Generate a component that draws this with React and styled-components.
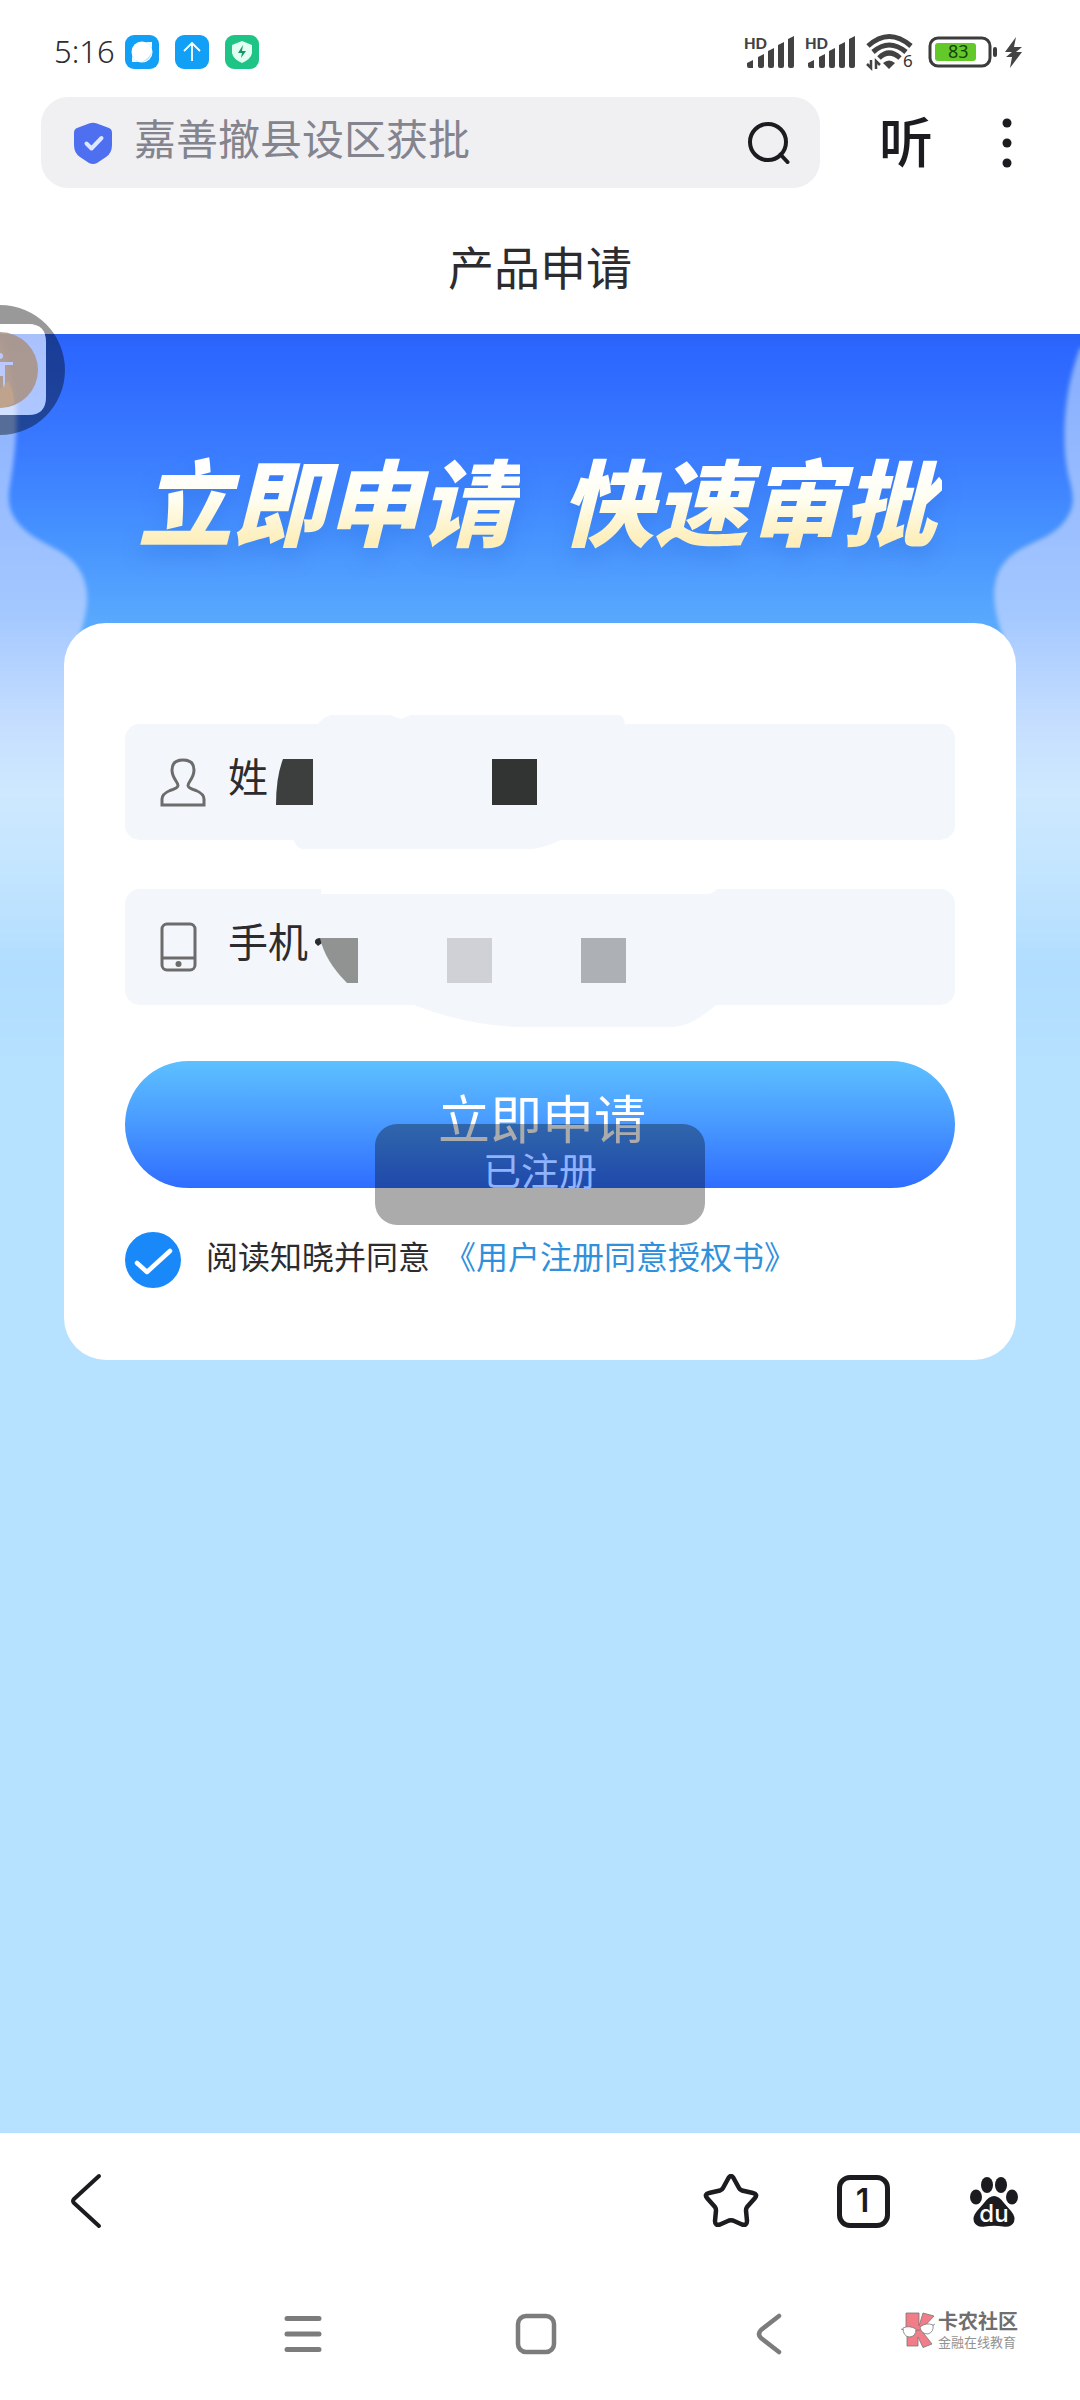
import React, { useState } from "react";
import styled, { createGlobalStyle } from "styled-components";

const GlobalStyle = createGlobalStyle`
  *, *::before, *::after { box-sizing: border-box; }
  body {
    margin: 0;
    background: #fff;
    font-family: "Noto Sans CJK SC", sans-serif;
    color: #2c2c2e;
  }
  button, input { font: inherit; color: inherit; }
`;

const Page = styled.div`
  min-height: 100vh;
  display: flex;
  flex-direction: column;
  background: #fff;
`;

const StatusBar = styled.header`
  height: 97px;
  padding: 7px 56px 0 54px;
  display: flex;
  align-items: center;
  justify-content: space-between;
`;

const StatusGroup = styled.div`
  display: flex;
  align-items: center;
  gap: ${(p) => p.$gap}px;
`;

const Clock = styled.time`
  width: 71px;
  font-family: "Noto Sans", sans-serif;
  font-weight: 300;
  font-size: 31px;
  line-height: 36px;
  padding-bottom: 2px;
`;

const AddressRow = styled.div`
  display: flex;
  align-items: center;
  padding: 0 60px 0 41px;
`;

const SearchBox = styled.form`
  flex: 1;
  height: 91px;
  display: flex;
  align-items: center;
  gap: 22px;
  padding: 0 30px 0 33px;
  border-radius: 27px;
  background: #f0f0f3;
`;

const SearchInput = styled.input`
  flex: 1;
  min-width: 0;
  height: 60px;
  padding: 0 0 12px;
  border: 0;
  outline: 0;
  background: transparent;
  font-size: 42px;
  line-height: 48px;
  color: #84848e;
  &::placeholder { color: #84848e; opacity: 1; }
`;

const IconButton = styled.button`
  display: flex;
  align-items: center;
  justify-content: center;
  flex: none;
  padding: 0;
  border: 0;
  background: none;
  cursor: pointer;
`;

const ListenButton = styled(IconButton)`
  margin-left: 58px;
  width: 56px;
  padding-bottom: 6px;
  font-size: 54px;
  line-height: 60px;
  font-weight: 500;
  color: #1c1c20;
`;

const MoreButton = styled(IconButton)`
  margin-left: 60px;
  width: 26px;
`;

const TitleBar = styled.div`
  height: 146px;
  padding-top: 8px;
  display: flex;
  align-items: center;
  justify-content: center;
`;

const PageTitle = styled.h1`
  margin: 0;
  font-size: 46px;
  line-height: 60px;
  font-weight: 400;
`;

const Main = styled.main`
  position: relative;
  flex: 1;
  padding-bottom: 60px;
  background: linear-gradient(#2b62f6 0, #2c67ff 14px, #2f6bff 40px, #3b7cff 120px, #4692ff 200px, #59a9fd 289px, #59a9fd 310px, transparent 310px) #b6e1ff;
`;

const SideGlow = styled.svg`
  position: absolute;
  top: 0;
  ${(p) => (p.$right ? "right: 0;" : "left: 0;")}
`;

const Slogan = styled.h2`
  position: relative;
  margin: 0;
  height: 289px;
  padding-top: 38px;
  display: flex;
  align-items: center;
  justify-content: center;
  gap: 40px;
  font-size: 94px;
  line-height: 120px;
  font-weight: 900;
  font-style: italic;
  filter: drop-shadow(0 10px 10px rgba(30, 90, 200, 0.25));
`;

const SloganPart = styled.span`
  padding-right: 6px;
  background: linear-gradient(#fff 20%, #fffef2 50%, #fdeebb 85%);
  background-clip: text;
  -webkit-background-clip: text;
  color: transparent;
`;

const Card = styled.form`
  position: relative;
  margin: 0 64px;
  padding: 101px 61px 72px;
  border-radius: 42px;
  background: #fff;
`;

const Field = styled.div`
  position: relative;
  height: 116px;
  display: flex;
  align-items: center;
  padding: 0 35px;
  border-radius: 15px;
  background: #f3f6fa;
  & + & { margin-top: 49px; }
`;

const FieldIcon = styled.svg`
  flex: none;
  width: 46px;
  height: 50px;
  margin-right: 22px;
`;

const FieldLabel = styled.label`
  font-size: 40px;
  line-height: 48px;
  padding-bottom: 14px;
`;

const FieldInput = styled.input`
  flex: 1;
  min-width: 0;
  height: 60px;
  border: 0;
  outline: 0;
  background: transparent;
  font-size: 40px;
`;

const Smudge = styled.svg`
  position: absolute;
  left: 0;
  top: -10px;
  pointer-events: none;
`;

const SubmitButton = styled.button`
  display: block;
  width: 100%;
  height: 127px;
  margin-top: 56px;
  padding: 0 0 16px 4px;
  border: 0;
  border-radius: 64px;
  background: linear-gradient(#5dc0ff, #4a9dff 45%, #2f6dff);
  color: #fff;
  font-size: 52px;
  line-height: 60px;
  cursor: pointer;
`;

const Toast = styled.div`
  position: absolute;
  left: 50%;
  top: 501px;
  transform: translateX(-50%);
  width: 330px;
  height: 101px;
  padding-bottom: 12px;
  display: flex;
  align-items: center;
  justify-content: center;
  border-radius: 22px;
  background: rgba(0, 0, 0, 0.33);
  color: #8fb3ff;
  font-size: 38px;
  line-height: 48px;
`;

const Agreement = styled.div`
  display: flex;
  align-items: center;
  height: 56px;
  margin-top: 44px;
  font-size: 32px;
  line-height: 44px;
`;

const TickWrap = styled.span`
  display: grid;
  width: 56px;
  height: 56px;
  margin-right: 25px;
  & > * { grid-area: 1 / 1; }
  svg { pointer-events: none; }
`;

const Tick = styled.input`
  appearance: none;
  width: 56px;
  height: 56px;
  margin: 0;
  border: 3px solid #1989fa;
  border-radius: 50%;
  &:checked { background: #1989fa; }
`;

const AgreementLabel = styled.label`
  padding-bottom: 10px;
`;

const AgreementLink = styled.a`
  margin-left: 14px;
  padding-bottom: 10px;
  color: #3190dc;
  text-decoration: none;
`;

const FloatingBall = styled.button`
  position: absolute;
  left: 0;
  top: -29px;
  width: 65px;
  height: 130px;
  padding: 0;
  border: 0;
  background: none;
  svg { display: block; }
`;

const BrowserBar = styled.nav`
  height: 134px;
  display: flex;
  align-items: center;
  justify-content: space-between;
  padding: 2px 60px 0 69px;
`;

const BrowserTools = styled.div`
  display: flex;
  align-items: center;
  gap: 78px;
`;

const TabCount = styled.button`
  width: 53px;
  height: 53px;
  padding: 0 2px 0 0;
  border: 5px solid #1c1c20;
  border-radius: 13px;
  background: none;
  font-family: Inter, sans-serif;
  font-size: 32px;
  line-height: 40px;
  font-weight: 600;
  color: #1c1c20;
`;

const SystemBar = styled.footer`
  height: 133px;
  display: flex;
  align-items: center;
  justify-content: space-between;
  padding: 0 62px 0 282px;
`;

const SystemKeys = styled.div`
  flex: 1;
  max-width: 508px;
  display: flex;
  align-items: center;
  justify-content: space-between;
`;

const SystemKey = styled(IconButton)`
  width: 42px;
  height: 42px;
`;

const Watermark = styled.div`
  display: flex;
  align-items: center;
  gap: 3px;
  padding-bottom: 8px;
`;

const WatermarkText = styled.div`
  display: flex;
  flex-direction: column;
  color: #6f6f6f;
`;

const WatermarkName = styled.strong`
  font-size: 20px;
  line-height: 24px;
  font-weight: 700;
`;

const WatermarkSub = styled.small`
  font-size: 13px;
  line-height: 18px;
  color: #929292;
`;

function Signal() {
  return (
    <svg width="51" height="36" viewBox="0 0 51 36" fill="#424242">
      <text x="0" y="15" fontFamily="Lato, sans-serif" fontWeight="900" fontSize="15">HD</text>
      <path d="M3 29l6-3v8H5q-2 0-2-2zM14 23l6-3v12q0 2-2 2h-2q-2 0-2-2zM24 17l6-3v18q0 2-2 2h-2q-2 0-2-2zM34 11l6-3v24q0 2-2 2h-2q-2 0-2-2zM44 5l6-3v30q0 2-2 2h-2q-2 0-2-2z" />
    </svg>
  );
}

function Wifi() {
  return (
    <svg width="52" height="40" viewBox="0 0 52 40" fill="none" stroke="#424242" strokeWidth="5">
      <path d="M2 14Q23-5 45 14M7 20Q23 6 40 20M13 26Q23 16 34 26" />
      <path d="M17 31q6-5 12 0l-6 6z" fill="#424242" stroke="none" />
      <path d="M5 28v8l-4-4M10 37v-8l4 4" strokeWidth="2.5" />
      <text x="37" y="35" fill="#333" stroke="none" fontFamily="Noto Sans" fontSize="17">6</text>
    </svg>
  );
}

function Battery() {
  return (
    <svg width="96" height="36" viewBox="0 0 96 36">
      <rect x="2" y="4" width="60" height="28" rx="8" fill="none" stroke="#3c3c3c" strokeWidth="3" />
      <rect x="7" y="9" width="41" height="18" rx="3" fill="#63c92a" />
      <text x="20" y="24" fontFamily="Noto Sans" fontSize="18" fill="#17420c">83</text>
      <rect x="65" y="13" width="4" height="10" rx="2" fill="#3c3c3c" />
      <path d="M88 3L77 18h7l-6 5h6l-2 11 12-16h-6l6-5h-8z" fill="#444" />
    </svg>
  );
}

function AppBadge({ kind }) {
  const green = kind === "shield";
  return (
    <svg width="35" height="35" viewBox="0 0 35 35">
      <rect width="34" height="34" rx="9" fill={green ? "#1dc486" : "#12a0f6"} />
      {kind === "planet" && (
        <>
          <circle cx="17" cy="17" r="10.5" fill="#fff" />
          <path d="M7 27V21l6 6zM27 7h-6l6 6z" fill="#eefaff" />
          <path d="M27 16q-1 10-11 11 8-3 11-11z" fill="#bfe2f8" />
        </>
      )}
      {kind === "arrow" && (
        <path d="M17 26V9M9 16l8-8 8 8" fill="none" stroke="#fff" strokeWidth="1.8" />
      )}
      {green && (
        <>
          <path d="M17 6l10 4v8q-1 6-10 10Q8 24 7 18v-8z" fill="#e2fff4" />
          <path d="M18 10l-5 8h4l-1 5 5-7h-4z" fill="#159866" />
        </>
      )}
    </svg>
  );
}

function Glow({ right }) {
  const id = right ? "glowRight" : "glowLeft";
  const d = right
    ? "M100 14C86 50 80 100 88 140C94 163 96 172 84 188C64 213 27 208 16 245C10 270 20 290 25 312L32 780H116V14Z"
    : "M0 6C22 50 18 100 11 145C7 165 8 176 18 189C41 216 71 211 84 245C92 270 83 285 78 312L70 780H-16V6Z";
  return (
    <SideGlow $right={right} width="100" height="740" viewBox="0 0 100 740" aria-hidden="true">
      <defs>
        <linearGradient id={id} x1="0" y1="0" x2="0" y2="740" gradientUnits="userSpaceOnUse">
          <stop offset="0" stopColor="#86adff" />
          <stop offset="0.24" stopColor="#9abeff" />
          <stop offset="0.38" stopColor="#a4c8ff" />
          <stop offset="0.53" stopColor="#c6dfff" />
          <stop offset="0.62" stopColor="#cde8ff" />
          <stop offset="0.72" stopColor="#c4e5ff" />
          <stop offset="0.86" stopColor="#b1ddff" />
          <stop offset="0.98" stopColor="#b6e1ff" />
        </linearGradient>
        <filter id={id + "Soft"} x="-20%" y="-5%" width="140%" height="110%">
          <feGaussianBlur stdDeviation="2" />
        </filter>
      </defs>
      <path d={d} fill={`url(#${id})`} filter={`url(#${id}Soft)`} />
    </SideGlow>
  );
}

export default function App() {
  const [agreed, setAgreed] = useState(true);
  const stop = (e) => e.preventDefault();

  return (
    <Page>
      <GlobalStyle />
      <StatusBar>
        <StatusGroup $gap={15}>
          <StatusGroup $gap={0}>
            <Clock>5:16</Clock>
            <AppBadge kind="planet" />
          </StatusGroup>
          <AppBadge kind="arrow" />
          <AppBadge kind="shield" />
        </StatusGroup>
        <StatusGroup $gap={10}>
          <Signal />
          <Signal />
          <Wifi />
          <Battery />
        </StatusGroup>
      </StatusBar>

      <AddressRow>
        <SearchBox onSubmit={stop} role="search">
          <svg width="38" height="42" viewBox="0 0 38 42">
            <path d="M15 1.500Q19 0 23 1.500L35 6Q38 7 38 11V23Q38 31 32 35L23 41Q19 43 15 41L6 35Q0 31 0 23V11Q0 7 3 6Z" fill="#4d6ff0" />
            <path d="M12.500 21.500l5 5L27.500 16" fill="none" stroke="#dfe6ff" strokeWidth="4" strokeLinecap="round" strokeLinejoin="round" />
          </svg>
          <SearchInput aria-label="搜索" placeholder="嘉善撤县设区获批" />
          <IconButton aria-label="搜索">
            <svg width="42" height="43" viewBox="0 0 42 43" fill="none" stroke="#1c1c20" strokeWidth="4" strokeLinecap="round">
              <circle cx="20" cy="21" r="18" />
              <path d="M32.500 33.500l7 7.500" />
            </svg>
          </IconButton>
        </SearchBox>
        <ListenButton>听</ListenButton>
        <MoreButton aria-label="更多">
          <svg width="10" height="50" viewBox="0 0 10 50" fill="#1c1c20">
            <circle cx="5" cy="5" r="4.500" />
            <circle cx="5" cy="25" r="4.500" />
            <circle cx="5" cy="45" r="4.500" />
          </svg>
        </MoreButton>
      </AddressRow>

      <TitleBar>
        <PageTitle>产品申请</PageTitle>
      </TitleBar>

      <Main>
        <Glow />
        <Glow right />
        <Slogan>
          <SloganPart>立即申请</SloganPart>
          <SloganPart>快速审批</SloganPart>
        </Slogan>

        <Card onSubmit={stop}>
          <Field>
            <Smudge width="831" height="136" viewBox="0 0 831 136" aria-hidden="true">
              <path d="M186 20Q197 1 208 1H265L276 5 286 1H493Q500 1 500 14V22L436 126Q416 135 405 135H178Q171 135 166 120Z" fill="#f3f6fa" />
            </Smudge>
            <FieldIcon viewBox="0 0 46 50" fill="none" stroke="#6c6c6c" strokeWidth="3">
              <path d="M2 48V42Q2 37 10 33.500Q18 31 18 28.500Q18 27 16 24Q12 18 12 13Q12 3 23 3T34 13Q34 18 30 24Q28 27 28 28.500Q28 31 36 33.500Q44 37 44 42V48Z" />
            </FieldIcon>
            <FieldLabel htmlFor="name">姓</FieldLabel>
            <FieldInput id="name" />
            <Smudge width="831" height="136" viewBox="0 0 831 136" aria-hidden="true">
              <path d="M158 45H188V91H151Q151 63 158 45Z" fill="#3d3e3e" />
              <rect x="367" y="45" width="45" height="46" fill="#323333" />
            </Smudge>
          </Field>

          <Field>
            <Smudge width="831" height="152" viewBox="0 0 831 152" aria-hidden="true">
              <path d="M196 10H592Q588 15 582 15H196Z" fill="#fff" />
              <path d="M286 125Q345 148 400 148H548Q566 148 592 125Z" fill="#f3f6fa" />
            </Smudge>
            <FieldIcon viewBox="0 0 46 50" fill="none" stroke="#6c6c6c" strokeWidth="3">
              <rect x="2" y="2" width="33" height="46" rx="5" />
              <path d="M2 36H35" />
              <circle cx="18.500" cy="42" r="3" fill="#6c6c6c" stroke="none" />
            </FieldIcon>
            <FieldLabel htmlFor="phone">手机</FieldLabel>
            <FieldInput id="phone" type="tel" />
            <Smudge width="831" height="152" viewBox="0 0 831 152" aria-hidden="true">
              <path d="M196 59q-7 0-6 5l3 3 4-3z" fill="#2c2c2e" />
              <path d="M195 59H233V104H222Q200 82 195 59Z" fill="#919292" />
              <rect x="322" y="59" width="45" height="45" fill="#cfd1d6" />
              <rect x="456" y="59" width="45" height="45" fill="#adb0b5" />
            </Smudge>
          </Field>

          <SubmitButton type="submit">立即申请</SubmitButton>

          <Agreement>
            <TickWrap>
              <Tick id="agree" type="checkbox" checked={agreed} onChange={(e) => setAgreed(e.target.checked)} />
              {agreed && (
                <svg width="56" height="56" viewBox="0 0 56 56">
                  <path d="M12 31l10 9L45 19" fill="none" stroke="#fff" strokeWidth="4.500" strokeLinecap="round" strokeLinejoin="round" />
                </svg>
              )}
            </TickWrap>
            <AgreementLabel htmlFor="agree">阅读知晓并同意</AgreementLabel>
            <AgreementLink href="#agreement">《用户注册同意授权书》</AgreementLink>
          </Agreement>

          <Toast role="status">已注册</Toast>
        </Card>

        <FloatingBall aria-label="悬浮球">
          <svg width="65" height="130" viewBox="0 0 65 130">
            <path fillRule="evenodd" d="M0 0A65 65 0 0 1 0 130V110H28Q46 110 46 92V37Q46 19 28 19H0Z" fill="#000" fillOpacity="0.4" />
            <path d="M0 19H28Q46 19 46 37V92Q46 110 28 110H0Z" fill="#fff" fillOpacity="0.6" />
            <circle cx="0" cy="65" r="38" fill="#a9907f" fillOpacity="0.85" />
            <circle cx="0" cy="51" r="3" fill="#bcc9ff" />
            <path d="M0 57H13V60H5V82H3V71H0Z" fill="#bcc9ff" />
            <path d="M8 76Q14 86 14 98Q8 102 0 103V84Z" fill="#c8a58c" fillOpacity="0.7" />
          </svg>
        </FloatingBall>
      </Main>

      <BrowserBar>
        <IconButton aria-label="返回">
          <svg width="34" height="56" viewBox="0 0 34 56" fill="none" stroke="#1c1c20" strokeWidth="4" strokeLinecap="round" strokeLinejoin="round">
            <path d="M30 3L5 26Q3 28 5 30L30 53" />
          </svg>
        </IconButton>
        <BrowserTools>
          <IconButton aria-label="收藏">
            <svg width="56" height="54" viewBox="0 0 56 54" fill="none" stroke="#1c1c20" strokeWidth="4.500" strokeLinejoin="round">
              <path d="M25.500 4Q28 0 30.500 4L36 14Q37 16 39 16.500L50 19Q55 20 52 24L44 33Q43 34.500 43 36.500L44 47Q44 52 39 50.500L30 46.500Q28 46 26 46.500L17 50.500Q12 52 12 47L13 36.500Q13 34.500 12 33L4 24Q1 20 6 19L17 16.500Q19 16 20 14Z" />
            </svg>
          </IconButton>
          <TabCount aria-label="标签页 1">1</TabCount>
          <IconButton aria-label="百度首页">
            <svg width="52" height="53" viewBox="0 0 52 53" fill="#1c1c20">
              <ellipse cx="19" cy="10" rx="6" ry="8" />
              <ellipse cx="33" cy="10" rx="6" ry="8" />
              <ellipse cx="8" cy="22" rx="6" ry="7.500" />
              <ellipse cx="44" cy="22" rx="6" ry="7.500" />
              <path d="M26 21Q31 21 36 28L43 36Q48 42 46 47Q43 53 35 51.500Q26 50 17 51.500Q9 53 6 47Q4 42 9 36L16 28Q21 21 26 21Z" />
              <text x="26" y="47" textAnchor="middle" fontFamily="Inter, sans-serif" fontWeight="500" fontSize="24" fill="#fff">du</text>
            </svg>
          </IconButton>
        </BrowserTools>
      </BrowserBar>

      <SystemBar>
        <SystemKeys>
          <SystemKey aria-label="最近任务">
            <svg width="40" height="40" viewBox="0 0 40 40" stroke="#7c7c7c" strokeWidth="5" strokeLinecap="round">
              <path d="M4 4.500H36M4 20H36M4 35.500H36" />
            </svg>
          </SystemKey>
          <SystemKey aria-label="主页">
            <svg width="42" height="42" viewBox="0 0 42 42" fill="none" stroke="#7c7c7c" strokeWidth="4.500">
              <rect x="3" y="3" width="36" height="36" rx="8" />
            </svg>
          </SystemKey>
          <SystemKey aria-label="返回">
            <svg width="28" height="42" viewBox="0 0 28 42" fill="none" stroke="#7c7c7c" strokeWidth="4.500" strokeLinecap="round">
              <path d="M24 3L6 17Q2 21 6 25L24 39" />
            </svg>
          </SystemKey>
        </SystemKeys>
        <Watermark>
          <svg width="34" height="36" viewBox="0 0 34 36" stroke="#777" strokeWidth="0.800">
            <path d="M5 1H18V14L22 1 33 4 20 18 31 32 22 35.500 17 25V34H6V22H5Z" fill="#f17d88" />
            <path d="M0 17l3 1M34 12l-3 2M14 20q2-3 5-2" fill="none" />
            <path d="M2 16Q8 13 15 17Q15 25 8 25Q2 24 2 16Z" fill="#fff" />
            <path d="M19 15Q25 10 32 13Q33 20 27 22Q20 22 19 15Z" fill="#fff" />
          </svg>
          <WatermarkText>
            <WatermarkName>卡农社区</WatermarkName>
            <WatermarkSub>金融在线教育</WatermarkSub>
          </WatermarkText>
        </Watermark>
      </SystemBar>
    </Page>
  );
}
